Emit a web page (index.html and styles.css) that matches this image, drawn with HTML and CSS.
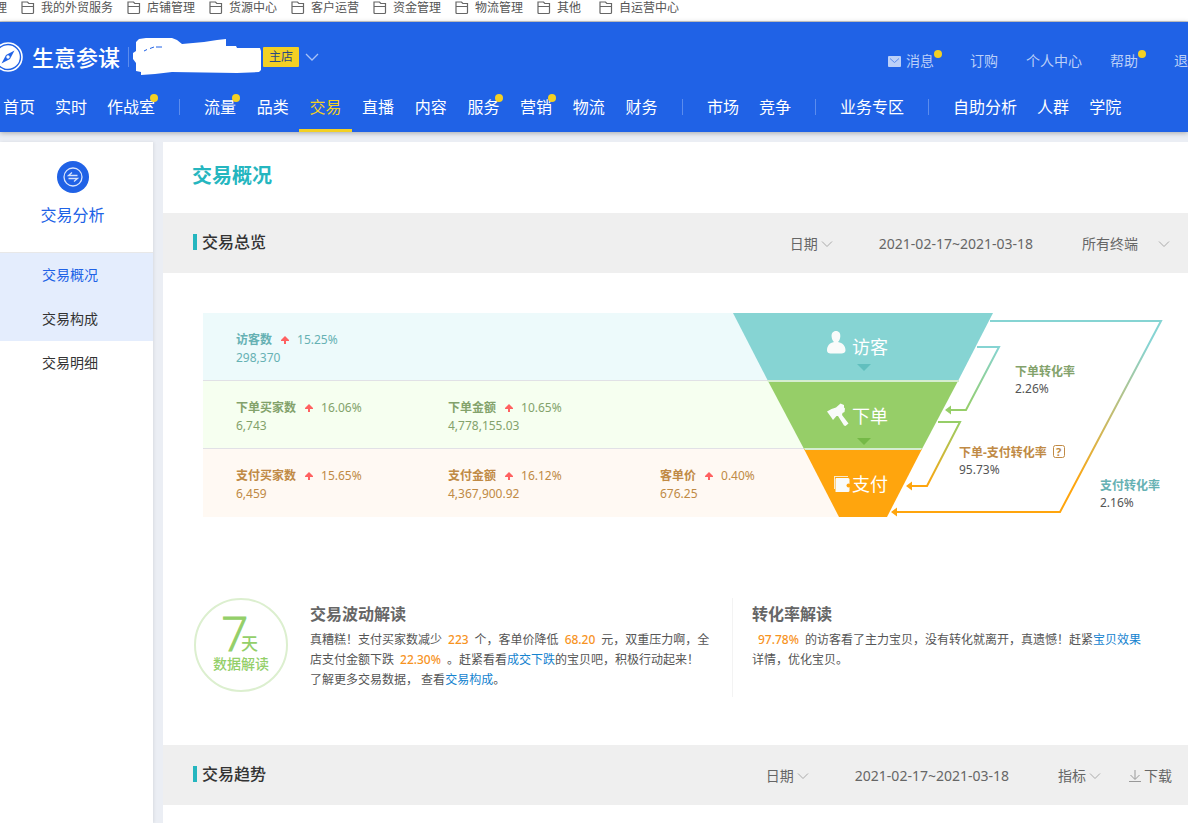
FILE: index.html
```html
<!DOCTYPE html>
<html lang="zh-CN">
<head>
<meta charset="utf-8">
<meta name="viewport" content="width=device-width, initial-scale=1">
<title>生意参谋 - 交易概况</title>
<link rel="stylesheet" href="styles.css">
</head>
<body>
<svg class="defs" width="0" height="0" aria-hidden="true">
  <symbol id="folder" viewBox="0 0 14 14"><path d="M1 11.500v-10.500h5.500l1.300 1.500h4.700v9q0 1-1 1H2q-1 0-1-1zM1 5.500h12" fill="none" stroke="#666" stroke-width="1.200"/></symbol>
  <symbol id="chevron" viewBox="0 0 12 12"><path d="M1 3.500l5 5 5-5" fill="none" stroke="currentColor" stroke-width="1"/></symbol>
  <symbol id="up" viewBox="0 0 8 8"><path d="M4 0l4 4v1H5v3H3V5H0V4z" fill="#ff6161"/></symbol>
</svg>

<nav class="bookmarks" aria-label="书签">
  <a href="#">理</a>
  <a href="#"><svg><use href="#folder"/></svg>我的外贸服务</a>
  <a href="#"><svg><use href="#folder"/></svg>店铺管理</a>
  <a href="#"><svg><use href="#folder"/></svg>货源中心</a>
  <a href="#"><svg><use href="#folder"/></svg>客户运营</a>
  <a href="#"><svg><use href="#folder"/></svg>资金管理</a>
  <a href="#"><svg><use href="#folder"/></svg>物流管理</a>
  <a class="short" href="#"><svg><use href="#folder"/></svg>其他</a>
  <a href="#"><svg><use href="#folder"/></svg>自运营中心</a>
</nav>

<header class="header">
  <div class="topline">
    <a class="brand" href="#">
      <svg class="compass" viewBox="0 0 30 30"><circle cx="15" cy="15" r="14" fill="none" stroke="#fff" stroke-width="1.600"/><circle cx="15" cy="15" r="11.800" fill="#fff"/><path d="M21.500 8.500L17 17l-8.500 4.500L13 13z" fill="#2062e6"/><circle cx="15" cy="15" r="1.700" fill="#fff"/></svg>
      <span>生意参谋</span>
    </a>
    <svg class="shop-name" viewBox="133 36 129 40"><path d="M136 41l3-3 7-1h26l5 2 5 4 22-2 13-2 9-1v7h10l1 2h23l1 3v19l-2 2-22 1-65-1-17 2-14 1v-3l-5-1v-8l-3-4v-6l3-2z" fill="#fff"/><path d="M144 50l3-1.500M150 47.500l4-1.500M156 46h6" fill="none" stroke="#2062e6" stroke-width="1"/></svg>
    <span class="badge">主店</span>
    <button class="shop-toggle" aria-label="切换店铺"><svg viewBox="0 0 14 14"><path d="M1 4l6 6 6-6" fill="none" stroke="#a9c2f6" stroke-width="1.300"/></svg></button>
    <nav class="account" aria-label="账户">
      <a class="has-dot" href="#"><svg class="mail" viewBox="0 0 13 11"><rect width="13" height="11" rx="1" fill="#bcd0f8"/><path d="M2 2.500l4.500 4 4.500-4" fill="none" stroke="#5b8cee"/></svg>消息</a>
      <a href="#">订购</a>
      <a href="#">个人中心</a>
      <a class="has-dot" href="#">帮助</a>
      <a href="#">退出</a>
    </nav>
  </div>
  <nav class="menu" aria-label="主导航">
    <div class="group"><a href="#">首页</a><a href="#">实时</a><a class="dot" href="#">作战室</a></div>
    <i class="sep"></i>
    <div class="group nine"><a class="dot" href="#">流量</a><a href="#">品类</a><a class="current" href="#">交易</a><a href="#">直播</a><a href="#">内容</a><a class="dot" href="#">服务</a><a class="dot" href="#">营销</a><a href="#">物流</a><a href="#">财务</a></div>
    <i class="sep"></i>
    <div class="group"><a href="#">市场</a><a href="#">竞争</a></div>
    <i class="sep"></i>
    <div class="group"><a href="#">业务专区</a></div>
    <i class="sep"></i>
    <div class="group"><a href="#">自助分析</a><a href="#">人群</a><a href="#">学院</a></div>
  </nav>
</header>

<div class="page">
  <aside class="sidebar">
    <div class="section">
      <svg viewBox="0 0 32 32"><circle cx="16" cy="16" r="16" fill="#2062e6"/><g fill="none" stroke="#d8e4fc"><circle cx="16" cy="16" r="9" stroke-width="1.300"/><path d="M20.500 14.500h-9l3.500-3M11.500 17.500h9l-3.500 3" stroke-width="1.300"/></g></svg>
      <span>交易分析</span>
    </div>
    <nav class="submenu" aria-label="交易分析">
      <a class="shade on" href="#">交易概况</a>
      <a class="shade" href="#">交易构成</a>
      <a href="#">交易明细</a>
    </nav>
  </aside>

  <main class="main">
    <h1>交易概况</h1>

    <section>
      <div class="band">
        <h2>交易总览</h2>
        <div class="filters overview">
          <button>日期<svg><use href="#chevron"/></svg></button>
          <span class="range">2021-02-17~2021-03-18</span>
          <div class="select"><select aria-label="终端"><option>所有终端</option></select><svg><use href="#chevron"/></svg></div>
        </div>
      </div>

      <div class="funnel">
        <div class="rows">
          <div class="row visit">
            <dl><dt>访客数</dt><dd class="rate"><svg><use href="#up"/></svg>15.25%</dd><dd>298,370</dd></dl>
          </div>
          <div class="row order">
            <dl><dt>下单买家数</dt><dd class="rate"><svg><use href="#up"/></svg>16.06%</dd><dd>6,743</dd></dl>
            <dl><dt>下单金额</dt><dd class="rate"><svg><use href="#up"/></svg>10.65%</dd><dd>4,778,155.03</dd></dl>
          </div>
          <div class="row pay">
            <dl><dt>支付买家数</dt><dd class="rate"><svg><use href="#up"/></svg>15.65%</dd><dd>6,459</dd></dl>
            <dl><dt>支付金额</dt><dd class="rate"><svg><use href="#up"/></svg>16.12%</dd><dd>4,367,900.92</dd></dl>
            <dl><dt>客单价</dt><dd class="rate"><svg><use href="#up"/></svg>0.40%</dd><dd>676.25</dd></dl>
          </div>
        </div>
        <svg class="chart" viewBox="733 313 455 204" role="img" aria-label="转化漏斗">
          <defs>
            <linearGradient id="g1" gradientUnits="userSpaceOnUse" x1="0" y1="345" x2="0" y2="485"><stop offset="0" stop-color="#86d4d3"/><stop offset="1" stop-color="#ffa50d"/></linearGradient>
            <linearGradient id="g2" gradientUnits="userSpaceOnUse" x1="0" y1="347" x2="0" y2="410"><stop offset="0" stop-color="#86d4d3"/><stop offset="1" stop-color="#96ce68"/></linearGradient>
            <linearGradient id="g3" gradientUnits="userSpaceOnUse" x1="0" y1="422" x2="0" y2="486"><stop offset="0" stop-color="#96ce68"/><stop offset="1" stop-color="#ffa50d"/></linearGradient>
          </defs>
          <path d="M733 313h10l40 67h-50z" fill="#edfafb"/>
          <path d="M733 381h50l30 67h-80z" fill="#f6fff0"/>
          <path d="M733 449h80l35 68H733z" fill="#fff9f3"/>
          <path d="M733 380h200v1H733zM733 448h180v1H733z" fill="#e1e1e6"/>
          <path d="M733 313h260l-35 68H768z" fill="#86d4d3"/>
          <path d="M768 381h190l-36 68H804z" fill="#96ce68"/>
          <path d="M804 449h118l-35 68h-48z" fill="#ffa50d"/>
          <path d="M767 380h192v2H768zM804 448h118l-1 2H805z" fill="#d5edd0"/>
          <path d="M857 364h14l-7 7z" fill="#61bfbe"/>
          <path d="M857 438h14l-7 7z" fill="#75b947"/>
          <g fill="none" stroke-width="2">
            <path d="M990 321h171l-101 191H896" stroke="url(#g1)"/>
            <path d="M977 347h22l-33 63H950" stroke="url(#g2)"/>
            <path d="M938 422h22l-33 64H912" stroke="url(#g3)"/>
          </g>
          <path d="M891 512l6-4.500v9zM906 486l6-4.500v9z" fill="#ffa50d"/>
          <path d="M945 410l6-4.500v9z" fill="#96ce68"/>
          <g fill="#f9fbfa">
            <path d="M836 331c3 0 4.600 2.300 4.300 5.500-.2 2.400-1 4.300-2.300 5.500 4.600 1 7.500 3.500 7.500 8.500 0 2-2 3-4 3h-11c-2 0-3.500-1-3.500-3 0-5 2.600-7.500 7-8.500-1.300-1.200-2.200-3.100-2.400-5.500-.2-3.200 1.400-5.500 4.400-5.500z"/>
            <path d="M827 411.500l4.500-2.500 4.500-1.500 4.500-4 3.500 1.500v2.500l1 1-.5 3.500-2 1-.5 2 6.500 8.500-3 2.500-1.500-.5-6-9.500h-1.500l-3.500 4-2-3z"/>
            <path d="M834 476h14v1h-13v12h-1z" opacity=".8"/>
            <path d="M836 478h12q1.500 0 1.500 1.500v11q0 1.500-1.500 1.500h-12.500v-13z"/>
          </g>
          <circle cx="848.500" cy="485.500" r="2" fill="#ffa50d"/>
          <g class="stage"><text x="852" y="354">访客</text><text x="852" y="423">下单</text><text x="852" y="491">支付</text></g>
          <g class="ratio">
            <text class="name c-order" x="1015" y="376">下单转化率</text><text x="1015" y="393">2.26%</text>
            <text class="name c-pay" x="959" y="457">下单-支付转化率</text><text x="959" y="474">95.73%</text>
            <text class="name c-visit" x="1100" y="490">支付转化率</text><text x="1100" y="507">2.16%</text>
          </g>
          <g class="help"><rect x="1053.500" y="445.500" width="11" height="12" rx="2" fill="none" stroke="#c08a45"/><text class="c-pay" x="1056" y="456">?</text></g>
        </svg>
      </div>

      <div class="insights">
        <svg class="seven" viewBox="0 0 94 94"><circle cx="47" cy="47" r="46" fill="#fff" stroke="#dcefcf" stroke-width="2"/><text class="num" x="27" y="53">7</text><text class="day" x="47" y="52">天</text><text class="cap" x="19" y="71">数据解读</text></svg>
        <article>
          <h3>交易波动解读</h3>
          <p>真糟糕！支付买家数减少<b>223</b>个，客单价降低<b>68.20</b>元，双重压力啊，全<br>店支付金额下跌<b>22.30%</b>。赶紧看看<a href="#">成交下跌</a>的宝贝吧，积极行动起来！<br>了解更多交易数据， 查看<a href="#">交易构成</a>。</p>
        </article>
        <article class="second">
          <h3>转化率解读</h3>
          <p><b>97.78%</b>的访客看了主力宝贝，没有转化就离开，真遗憾！赶紧<a href="#">宝贝效果</a><br>详情，优化宝贝。</p>
        </article>
      </div>
    </section>

    <section>
      <div class="band">
        <h2>交易趋势</h2>
        <div class="filters trend">
          <button>日期<svg><use href="#chevron"/></svg></button>
          <span class="range">2021-02-17~2021-03-18</span>
          <button>指标<svg><use href="#chevron"/></svg></button>
          <button class="download"><svg viewBox="0 0 12 12"><path d="M6 0v9M1.500 5L6 9.500 10.500 5M0 11.500h12" fill="none" stroke="#999"/></svg>下载</button>
        </div>
      </div>
    </section>
  </main>
</div>
</body>
</html>
```
FILE: styles.css
```css
* { box-sizing: border-box; }
body {
  margin: 0;
  min-height: 100vh;
  display: flex;
  flex-direction: column;
  overflow-x: hidden;
  background: #ebeef4;
  color: #333;
  font-family: "Noto Sans", "Noto Sans CJK SC", sans-serif;
  font-size: 14px;
  line-height: 20px;
}
h1, h2, h3, p, dl, dd { margin: 0; }
a { color: inherit; text-decoration: none; }
button, select { font: inherit; color: inherit; background: none; border: 0; padding: 0; margin: 0; }
svg { flex: none; display: block; }
.defs { position: absolute; }

.bookmarks {
  display: flex;
  gap: 14px;
  height: 22px;
  padding-bottom: 6px;
  margin-left: -5px;
  background: #fff;
  border-bottom: 1px solid #ccc;
  color: #555;
  font-size: 12px;
  line-height: 15px;
  white-space: nowrap;
}
.bookmarks a { display: flex; align-items: center; gap: 6px; }
.bookmarks .short { min-width: 48px; }
.bookmarks svg { width: 14px; height: 14px; }

.header {
  position: relative;
  background: #2062e6;
  color: #fff;
  box-shadow: 0 1px 5px rgba(0, 0, 0, .3);
  white-space: nowrap;
}
.topline { display: flex; align-items: center; height: 70px; overflow: hidden; }
.brand { display: flex; align-items: center; gap: 9px; margin-left: -7px; font-size: 22px; line-height: 32px; font-weight: 500; }
.brand span { padding-right: 9px; background: linear-gradient(#5b8cee, #5b8cee) right / 1px 20px no-repeat; }
.compass { width: 30px; height: 30px; }
.shop-name { width: 129px; height: 40px; margin-left: 4px; }
.badge { width: 36px; margin-left: 1px; border-radius: 1px; background: #f3d024; color: #2b4a80; font-size: 12px; line-height: 20px; text-align: center; }
.shop-toggle { margin-left: 6px; }
.shop-toggle svg { width: 14px; height: 14px; }
.account { display: flex; gap: 28px; margin: 8px -14px 0 auto; color: #bcd0f8; }
.account a { display: flex; align-items: center; }
.mail { width: 13px; height: 11px; margin-right: 5px; }
.has-dot::after { content: ""; width: 8px; height: 8px; margin-bottom: 14px; border-radius: 50%; background: #f3d024; }

.menu { display: flex; height: 40px; margin-left: -7px; font-size: 16px; line-height: 30px; }
.group { display: flex; }
.group a { position: relative; padding: 0 10px; }
.nine { width: 474px; }
.nine a { flex: 1; }
.group .current { color: #f3d024; border-bottom: 3px solid #f3d024; }
.dot::after { content: ""; position: absolute; top: 2px; right: 7px; width: 8px; height: 8px; border-radius: 50%; background: #f3d024; }
.sep { width: 29px; background: linear-gradient(#5b8cee, #5b8cee) 14px 7px / 1px 16px no-repeat; }

.page { flex: 1; display: flex; gap: 10px; padding-top: 10px; }
.sidebar { flex: 0 0 153px; background: #fff; box-shadow: 1px 0 3px rgba(0, 0, 0, .08); }
.section { display: flex; flex-direction: column; align-items: center; gap: 12px; padding: 19px 8px 27px 0; color: #2062e6; font-size: 16px; }
.section svg { width: 32px; height: 32px; }
.submenu { border-top: 1px solid #e8e8e8; }
.submenu a { display: block; padding-left: 42px; line-height: 44px; }
.submenu .shade { background: #e4edfd; }
.submenu .on { color: #2062e6; }

.main { flex: 1; min-width: 0; background: #fff; }
h1 { padding: 19px 29px 22px; color: #25b6bf; font-size: 20px; line-height: 30px; font-weight: 700; }
.band { display: flex; align-items: center; justify-content: space-between; height: 60px; padding: 0 16px 2px 30px; background: #efefef; }
h2 { padding-left: 5px; border-left: 4px solid #25b6bf; font-size: 16px; line-height: 16px; font-weight: 500; }
.filters { display: flex; align-items: center; padding-top: 4px; color: #666; }
.filters.overview { padding-right: 2px; }
.filters button { display: flex; align-items: center; gap: 3px; }
.filters svg { width: 12px; height: 12px; color: #aaa; }
.range { margin: 0 49px 0 46px; }
.select { display: grid; grid-template-columns: 76px 12px; align-items: center; }
.select select { grid-area: 1 / 1 / 2 / 3; appearance: none; }
.select svg { grid-area: 1 / 2; pointer-events: none; }
.filters .download { margin-left: 28px; }

.funnel { display: flex; padding: 40px 0 0 40px; }
.rows { position: relative; z-index: 1; flex: 1; min-width: 0; white-space: nowrap; }
.row { display: grid; grid-template-columns: 212px 212px 1fr; height: 68px; padding: 18px 0 0 33px; border-bottom: 1px solid #e1e1e6; font-size: 12px; line-height: 18px; }
.row dl { display: grid; min-width: 0; grid-template-columns: max-content max-content; align-content: start; column-gap: 9px; }
.row dt { font-weight: 700; }
.row dd { grid-column: 1 / -1; }
.row .rate { grid-column: 2; display: flex; align-items: center; gap: 8px; }
.rate svg { width: 8px; height: 8px; }
.visit { background: #edfafb; color: #66b1b3; }
.order { background: #f6fff0; color: #83a26b; }
.pay { background: #fff9f3; color: #c08a45; border-bottom: 0; }
.chart { width: 455px; height: 204px; }
.stage { font-size: 18px; fill: #fff; }
.ratio { font-size: 12px; fill: #555; }
.ratio .name { font-weight: 700; }
.help { font-size: 11px; font-weight: 700; }
.ratio .c-order { fill: #83a26b; }
.ratio .c-pay, .help .c-pay { fill: #c08a45; }
.ratio .c-visit { fill: #66b1b3; }

.insights { display: flex; align-items: flex-start; padding: 81px 20px 48px 31px; }
.seven { width: 94px; height: 94px; margin-right: 22px; fill: #94cf69; }
.num { font: 300 48px "Open Sans", sans-serif; stroke: #94cf69; stroke-width: 1px; }
.day { font-size: 17px; font-weight: 500; }
.cap { font-size: 14px; font-weight: 500; }
.insights article { flex: 0 0 422px; min-height: 99px; color: #555; font-size: 12px; line-height: 20px; white-space: nowrap; }
.insights .second { flex: 1; padding-left: 19px; border-left: 1px solid #f3f3f3; }
h3 { padding: 6px 0; color: #666; font-size: 16px; line-height: 20px; font-weight: 700; }
.insights b { margin: 0 6px; color: #f7931e; font-weight: 500; }
.insights p a { color: #1583cf; }
```
